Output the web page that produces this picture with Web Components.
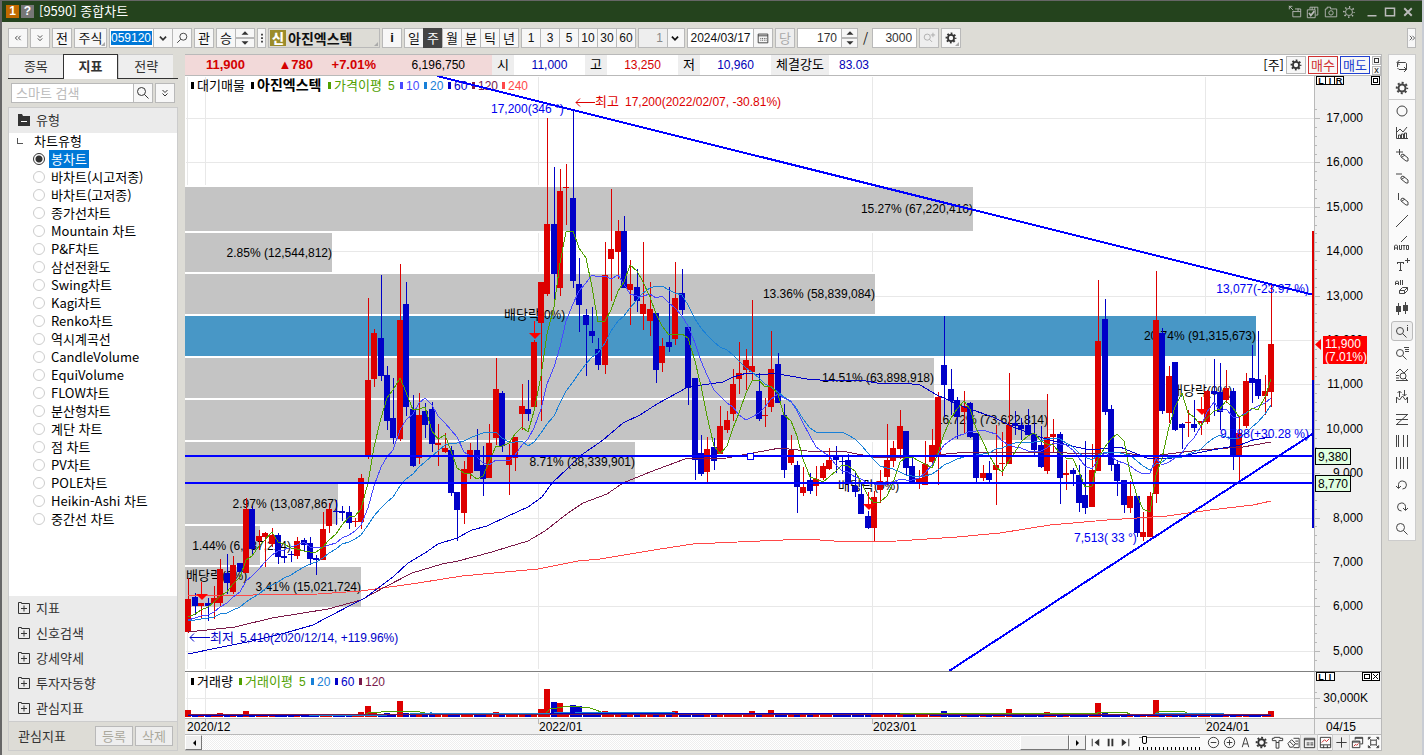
<!DOCTYPE html>
<html lang="ko">
<head>
<meta charset="utf-8">
<title>[9590] 종합차트</title>
<style>
    html, body { height: 100%; margin: 0; }
    body {
        --line: #b9b9b9;
        --ink: #333;
        --num: 12px/16px "Liberation Sans", "Noto Sans CJK KR", sans-serif;
        background: #dddcd6;
        font: 13px/18px "Noto Sans CJK KR", sans-serif;
        color: #000;
        overflow: hidden;
    }
</style>
</head>
<body>
<chart-window></chart-window>

<script>
const BASE = `
    * { box-sizing: border-box; }
    button, input, select { font: inherit; color: inherit; margin: 0; padding: 0; border: 0; border-radius: 0; background: none; }
    button { cursor: pointer; display: flex; align-items: center; justify-content: center; }
`;

class BaseElement extends HTMLElement {
    constructor() {
        super();
        this.attachShadow({ mode: "open" });
    }

    connectedCallback() {
        this.shadowRoot.innerHTML = `<style>${BASE}${this.styles()}</style>${this.markup()}`;
    }

    styles() { return ":host { display: block; }"; }
    markup() { return "<slot></slot>"; }
}

/* ---------- icons ---------- */
const GEAR = `<circle cx="8" cy="8" r="3.500" stroke-width="2"/><circle cx="8" cy="8" r="5.200" stroke-width="2" stroke-dasharray="2.040 2.040" stroke-dashoffset="1"/>`;
const LENS = `<circle cx="6.500" cy="6.500" r="4"/><path d="M9.500 9.500l4 4"/>`;
const ERASER = `<path d="M7 8l2-1 5 4v3h-2l-5-4zM8 10l3-2"/>`;

const ICONS = {
    gear: GEAR,
    lens: LENS,
    lensLeft: `<circle cx="9.500" cy="6.500" r="4"/><path d="M6.500 9.500l-4 4"/>`,
    left2: `<path d="M7.500 5.500L5 8l2.500 2.500M11 5.500L8.500 8l2.500 2.500"/>`,
    right2: `<path d="M5 5l3 3-3 3M8.500 5l3 3-3 3"/>`,
    down2: `<path d="M5.500 5L8 7.500 10.500 5M5.500 8.500L8 11l2.500-2.500"/>`,
    down: `<path d="M4.500 6.500L8 10l3.500-3.500" stroke-width="2"/>`,
    dots: `<path d="M7 3h2v2H7zM7 7h2v2H7zM7 11h2v2H7z" fill="currentColor" stroke="none"/>`,
    up1: `<path d="M4 10l4-4 4 4z" fill="currentColor" stroke="none"/>`,
    down1: `<path d="M4 6l4 4 4-4z" fill="currentColor" stroke="none"/>`,
    triLeft: `<path d="M10 5v6L7 8z" fill="currentColor" stroke="none"/>`,
    triRight: `<path d="M6 5v6l3-3z" fill="currentColor" stroke="none"/>`,
    calendar: `<path d="M2.500 3.500h11v10h-11zM2.500 5.500h11"/><path d="M5 8.500h7M5 10.500h7" stroke-dasharray="1 1"/>`,
    zoomIn: `<circle cx="6" cy="7" r="3.500"/><path d="M8.500 9.500l3 3M10 4.500h5M12.500 2v5"/>`,
    folderPlus: `<path d="M2.500 13.500v-11h3v1h8v10zM8 5.500v6M5 8.500h6"/>`,
    folderMinus: `<path d="M2 14V2h4l1 2h7v10z" fill="#333" stroke="none"/><path d="M5 9.500h6" stroke="#fff"/>`,
    /* window bar */
    popout: `<path d="M5.500 7v6.500h9v-9H8M5.500 7.500h9M11.500 4v3M1 1l5 5M1.500 5V1.500H5"/>`,
    checks: `<path d="M4.500 5V2.500h9v9H11M1.500 5.500h9v9h-9zM7 2.500v3M10 2.500v3"/><path d="M3.500 9l2 3 4-5" stroke-width="2"/>`,
    camera: `<path d="M1.500 4.500h2v-2h4v2h7v9h-13z"/><circle cx="8" cy="9" r="2.500"/>`,
    gearThin: `<circle cx="8" cy="8" r="4"/><circle cx="8" cy="8" r="5.800" stroke-width="2" stroke-dasharray="1.500 3.050" stroke-dashoffset=".7"/>`,
    minimize: `<path d="M2 13h12" stroke-width="2"/>`,
    maximize: `<path d="M2 3h12v10H2z" stroke-width="2"/>`,
    close: `<path d="M3 3l10 10M13 3L3 13" stroke-width="2.500"/>`,
    /* drawing rail */
    sync: `<path d="M3.500 9V4.500h8M5.500 2L3 4.500 5.500 7M11.500 4.500l1 1v6H5M10 9l2.500 2.500L10 14" /><path d="M5 11.500L3.500 10"/>`,
    circle: `<circle cx="8" cy="8" r="5"/>`,
    bars: `<path d="M2.500 2v11.500H14M4.500 13v-3h2v3M7.500 13V9h2v4M10.500 13V8h2v5M3 7l3-3 3 3 4-5"/>`,
    crossErase: `<path d="M2 5h7M5.500 2v6"/>${ERASER}`,
    lineErase: `<path d="M2 5h6"/>${ERASER}`,
    vertErase: `<path d="M4.500 2v7"/>${ERASER}`,
    slash: `<path d="M2 14L14 2"/>`,
    auto: `<path d="M7 7l6-6"/><path d="M.5 15v-4l1-1h1l1 1v4M.5 13h3M5.500 10v4.500h2V10M8.500 10.500h3M10 10.500V15M12.500 10.500h2v4h-2z"/>`,
    textPlus: `<path d="M3 5.500h7M3.500 5v2M9.500 5v2M6.500 5.500v8M5 13.500h3M11 3.500h5M13.500 1v5"/>`,
    allErase: `<path d="M1.500 6V3l1-1h1l1 1v3M1.500 4.500h3M6.500 1v5M8.500 1v5M5.500 11.500l3-3h5v3l-3 3h-5zM5.500 11.500h5l3-3M10.500 11.500v3"/>`,
    candles: `<path d="M4.500 2v12M11.500 1v12"/><path d="M2 5h5v6H2zM9 4h5v6H9z" fill="currentColor" stroke="none"/>`,
    lensInfo: `<circle cx="6" cy="8" r="3.500"/><path d="M8.500 10.500l4 4M13.500 2v1M13.500 4v4"/>`,
    lensList: `<circle cx="6" cy="8" r="3.500"/><path d="M8.500 10.500l4 4M10 2.500h5M11 4.500h4M11 6.500h4"/>`,
    lensChart: `<path d="M2 6l4-4 4 4 4-4M2 8.500h3M2 11h3M2 13.500h12"/><circle cx="9" cy="9" r="3"/><path d="M11 11l3 3"/>`,
    waves: `<path d="M2.500 14V8l3 3 3-4 3 4 2-3v6M5.500 8V2M3.500 4l2-2 2 2M10.500 1v6M8.500 5l2 2 2-2"/>`,
    zigzag: `<path d="M2 3.500h12M2 13.500h12M2 8.500h12M13 4L3 13"/>`,
    cols1: `<path d="M2.500 2v12M4.500 2v12M9.500 2v12M13.500 2v12"/>`,
    cols2: `<path d="M2.500 2v12M6.500 2v12M9.500 2v12M13.500 2v12"/>`,
    undo: `<path d="M4.500 11V7.500a4 4 0 1 1 4 4.500M2 9l2.500 2.500L7 9"/>`,
    redo: `<path d="M11.500 11V7.500a4 4 0 1 0-4 4.500M9 9l2.500 2.500L14 9"/>`,
    /* playback and zoom */
    first: `<path d="M4.500 4v8"/><path d="M12 4v8L7 8z" fill="currentColor" stroke="none"/>`,
    pause: `<path d="M6 4v8M10 4v8" stroke-width="2"/>`,
    last: `<path d="M11.500 4v8"/><path d="M4 4v8l5-4z" fill="currentColor" stroke="none"/>`,
    minusO: `<circle cx="8" cy="8" r="5.500"/><path d="M5 8h6"/>`,
    plusO: `<circle cx="8" cy="8" r="5.500"/><path d="M5 8h6M8 5v6"/>`,
    letterA: `<path d="M4.500 13l3-10h1l3 10M5.500 9.500h5"/>`,
    brush: `<path d="M2.500 6V3.500h2v-1h6v1h3V6h-4v8h-3V6zM6.500 8h3"/>`,
    erasePage: `<path d="M8 3.500h6v10H8M10 6.500h3M10 9.500h3M2 9l4-4 4 4-3 4H4zM4 7l4 4"/>`,
    grid: `<path d="M2.500 3.500h11v10h-11zM2.500 5h11M5 8.500h3M5 10.500h3M9 8.500h3M9 10.500h3"/>`,
    chartBox: `<path d="M2.500 2.500h11v11h-11zM2.500 10.500h11M6 11v3M10 11v3"/><path d="M4 8l3-3 2 2 3-3" stroke="#c22"/>`,
    plus: `<path d="M8 2.500v11M2.500 8h11"/>`,
    windows: `<path d="M5.500 5V2.500h8v7H11M5.500 3.500h8M2.500 6.500h8v7h-8zM2.500 7.500h8"/><path d="M4 12l2-2 1 1 2-2" stroke="#c22"/>`,
    expand: `<path d="M5 5.500h6v5H5zM2.500 5V2.500H5M11 2.500h2.500V5M13.500 11v2.500H11M5 13.500H2.500V11M3 3l2 2M13 3l-2 2M3 13l2-2M13 13l-2-2"/>`
};

class UiIcon extends BaseElement {
    styles() {
        return `
            :host { display: inline-block; width: 16px; height: 16px; flex: none; }
            svg { display: block; width: 100%; height: 100%; fill: none; stroke: currentColor; }
        `;
    }
    markup() {
        return `<svg viewBox="0 0 16 16" aria-hidden="true">${ICONS[this.getAttribute("name")]}</svg>`;
    }
}
customElements.define("ui-icon", UiIcon);

const icon = (name) => `<ui-icon name="${name}"></ui-icon>`;
const iconButton = (name, label, cls = "") => `<button type="button" class="${cls}" aria-label="${label}">${icon(name)}</button>`;

/* ---------- title bar ---------- */
class TitleBar extends BaseElement {
    styles() {
        return `
            :host {
                display: flex; align-items: center; height: 22px; padding: 0 5px 0 4px;
                background: #24431d; color: #fff; border-top: 1px solid #666;
            }
            .tag { width: 13px; height: 13px; margin-right: 2px; font: bold 12px/13px "Liberation Sans", sans-serif; text-align: center; background: #c26a00; color: #fff; }
            .help { background: #777; }
            h1 { margin: 0 auto 0 3px; font-size: 13px; line-height: 18px; padding-bottom: 1px; font-weight: normal; }
            button { width: 18px; height: 18px; color: #bbb; }
            ui-icon { width: 14px; height: 14px; }
            .win { width: 18px; }
            .win ui-icon { width: 12px; height: 12px; }
            .gap { margin-left: 5px; }
        `;
    }
    markup() {
        return `
            <span class="tag">1</span><button type="button" class="tag help" aria-label="도움말"><span>?</span></button>
            <h1><slot></slot></h1>
            ${iconButton("popout", "분리")}${iconButton("checks", "선택")}${iconButton("camera", "캡처")}${iconButton("gearThin", "설정")}
            ${iconButton("minimize", "최소화", "win gap")}${iconButton("maximize", "최대화", "win")}${iconButton("close", "닫기", "win")}
        `;
    }
}
customElements.define("title-bar", TitleBar);

/* ---------- main toolbar ---------- */
class MainToolbar extends BaseElement {
    styles() {
        return `
            :host { display: flex; align-items: center; gap: 2px; height: 32px; padding-left: 6px; color: #111; }
            button, .box { height: 20px; border: 1px solid var(--line); background: #f7f7f7; }
            button { width: 20px; flex: none; }
            button ui-icon { width: 14px; height: 14px; color: #333; }
            .group { display: flex; }
            .group > * + * { margin-left: -1px; }
            .nums { font: var(--num); }
            .wide { width: 33px; position: relative; }
            .corner::after { content: ""; position: absolute; right: 1px; bottom: 1px; border: 2px solid transparent; border-right-color: #aaa; border-bottom-color: #aaa; }
            .corner { position: relative; }
            .box { display: flex; align-items: center; background: #fff; font: var(--num); }
            .code { width: 45px; padding-left: 1px; }
            .code input { width: 41px; height: 14px; background: #0078d7; color: #fff; }
            .spin { display: flex; flex-direction: column; width: 20px; height: 20px; }
            .spin.slim { width: 17px; }
            .spin button { width: 100%; height: 10px; overflow: hidden; }
            .narrow { width: 9px; }
            .stock { width: 112px; padding: 1px; font-size: 14px; font-weight: bold; background: #dddcd6; gap: 2px; justify-content: flex-start; }
            .stock b { width: 16px; height: 16px; line-height: 16px; font-size: 13px; color: #fff; background: #9b8c2b; }
            .bold { font: bold 13px/16px "Liberation Sans", sans-serif; }
            .on { background: #444; color: #fff; border-color: #444; }
            .min { display: grid; grid-template-columns: 29px 16px; width: 47px; background: linear-gradient(90deg, #eee 28px, var(--line) 28px 29px, #f7f7f7 29px); }
            .min select { grid-area: 1 / 1 / 2 / 3; appearance: none; height: 18px; padding-right: 21px; text-align: right; text-align-last: right; color: #888; }
            .min ui-icon { grid-area: 1 / 2; width: 14px; height: 14px; pointer-events: none; }
            input.num { width: 100%; text-align: right; padding-right: 4px; color: #333; }
            .date { width: 67px; }
            .date input { width: 100%; text-align: center; }
            .count { width: 45px; }
            .muted, .muted ui-icon { color: #aaa; background: #eee; }
            .slash { padding: 0 2px 0 3px; }
            .more { width: 9px; margin-left: auto; margin-right: 6px; }
            .more ui-icon { width: 12px; height: 12px; }
        `;
    }
    markup() {
        const cells = (list) => list.map((t) => `<button type="button"${t === "주" ? ' class="on" aria-pressed="true"' : ""}>${t}</button>`).join("");
        const spin = (label, cls = "") => `<span class="spin ${cls}">${iconButton("up1", label + " 증가")}${iconButton("down1", label + " 감소")}</span>`;
        return `
            <div class="group">${iconButton("left2", "패널 접기")}</div>
            ${iconButton("down2", "펼치기")}
            <button type="button">전</button>
            <button type="button" class="wide corner">주식</button>
            <div class="group">
                <label class="box code"><input aria-label="종목코드" value="059120"></label>
                ${iconButton("down", "종목 목록")}${iconButton("lensLeft", "종목 검색")}
            </div>
            <button type="button">관</button>
            <div class="group"><button type="button">승</button>${spin("종목")}</div>
            ${iconButton("dots", "더보기", "narrow")}
            <button type="button" class="stock corner"><b>신</b>아진엑스텍</button>
            <button type="button" class="bold">i</button>
            <div class="group">${cells(["일", "주", "월", "분", "틱", "년"])}</div>
            <div class="group nums">${cells(["1", "3", "5", "10", "30", "60"])}</div>
            <div class="box min"><select aria-label="분 단위"><option>1</option></select>${icon("down")}</div>
            <div class="group">
                <label class="box date"><input aria-label="기준일" value="2024/03/17"></label>${iconButton("calendar", "달력")}
            </div>
            <button type="button" class="muted">당</button>
            <div class="group">
                <label class="box count"><input class="num" aria-label="표시 봉 수" value="170"></label>${spin("봉 수", "slim")}
            </div>
            <span class="slash">/</span>
            <label class="box count"><input class="num" aria-label="전체 봉 수" value="3000"></label>
            ${iconButton("zoomIn", "확대", "muted")}
            ${iconButton("gear", "차트 설정", "corner")}
            ${iconButton("right2", "더보기", "more")}
        `;
    }
}
customElements.define("main-toolbar", MainToolbar);

/* ---------- side panel ---------- */
const CHART_TYPES = ["봉차트", "바차트(시고저종)", "바차트(고저종)", "종가선차트", "Mountain 차트", "P&amp;F차트", "삼선전환도",
    "Swing차트", "Kagi차트", "Renko차트", "역시계곡선", "CandleVolume", "EquiVolume", "FLOW차트", "분산형차트",
    "계단 차트", "점 차트", "PV차트", "POLE차트", "Heikin-Ashi 차트", "중간선 차트"];

class SidePanel extends BaseElement {
    styles() {
        return `
            :host { display: flex; flex-direction: column; width: 170px; flex: none; color: var(--ink); }
            .tabs { display: flex; height: 25px; padding-right: 5px; border-bottom: 1px solid #333; }
            .tabs button { flex: 1; padding-bottom: 2px; background: #eee; border-top: 1px solid #ccc; border-left: 1px solid #ccc; }
            .tabs .on { background: #fff; border: 1px solid #333; border-bottom: 0; height: 25px; font-weight: bold; }
            .search { display: flex; height: 28px; padding: 4px 3px; }
            .search input { flex: 1; min-width: 0; border: 1px solid var(--line); background: #fff; padding: 0 0 1px 4px; }
            .search input::placeholder { color: #bbb; opacity: 1; }
            .search button { width: 20px; border: 1px solid var(--line); background: #f7f7f7; margin-left: -1px; }
            .search button:last-child { margin-left: 2px; }
            .panel { flex: 1; min-height: 0; display: flex; flex-direction: column; border: 1px solid #ccc; background: #fff; }
            .row { display: flex; align-items: center; gap: 4px; flex: none; width: 100%; height: 25px; padding: 0 0 2px 7px; justify-content: flex-start; background: #ebebeb; }
            fieldset { flex: 1; min-height: 0; margin: 0; padding: 0; border: 0; color: #000; overflow: hidden; }
            legend { float: left; width: 100%; padding: 0 0 2px 8px; height: 18px; display: flex; align-items: center; gap: 11px; }
            legend::before { content: ""; width: 5px; height: 5px; border: solid #555; border-width: 0 0 1px 1px; }
            fieldset label { clear: both; display: flex; align-items: center; gap: 4px; height: 18px; padding: 0 0 2px 24px; }
            fieldset input { appearance: none; width: 12px; height: 12px; flex: none; border: 1px solid #ccc; border-radius: 50%; background: #fff; }
            fieldset span { padding: 0 2px; }
            input:checked { border-color: #333; background: radial-gradient(#333 3px, #fff 4px); }
            input:checked + span { background: #0078d7; color: #fff; }
            footer { display: flex; align-items: center; gap: 2px; height: 29px; padding: 0 4px 1px 9px; background: #dddcd6; border-top: 1px solid #ccc; }
            footer span { margin-right: auto; }
            footer button { width: 38px; height: 20px; border: 1px solid var(--line); background: #eee; color: #aaa89c; }
        `;
    }
    markup() {
        return `
            <div class="tabs" role="tablist">
                <button type="button" role="tab">종목</button><button type="button" role="tab" class="on" aria-selected="true">지표</button><button type="button" role="tab">전략</button>
            </div>
            <div class="search"><input type="text" placeholder="스마트 검색" aria-label="스마트 검색">${iconButton("lens", "검색")}${iconButton("down2", "펼치기")}</div>
            <div class="panel">
                <button type="button" class="row">${icon("folderMinus")}유형</button>
                <fieldset>
                    <legend>차트유형</legend>
                    ${CHART_TYPES.map((t, i) => `<label><input type="radio" name="type"${i ? "" : " checked"}><span>${t}</span></label>`).join("")}
                </fieldset>
                ${["지표", "신호검색", "강세약세", "투자자동향", "관심지표"].map((t) => `<button type="button" class="row">${icon("folderPlus")}${t}</button>`).join("")}
                <footer><span>관심지표</span><button type="button">등록</button><button type="button">삭제</button></footer>
            </div>
        `;
    }
}
customElements.define("side-panel", SidePanel);

/* ---------- quote bar ---------- */
class QuoteBar extends BaseElement {
    styles() {
        return `
            :host { display: flex; align-items: center; height: 22px; background: #fff; border: 1px solid var(--line); border-left: 0; font: var(--num); }
            .now { display: flex; height: 20px; line-height: 20px; padding-right: 27px; background: #f2d9d9; text-align: right; }
            .now b { font: bold 13px/20px "Liberation Sans", sans-serif; color: #d40000; }
            .w60 { width: 60px; } .w68 { width: 68px; } .w63 { width: 63px; } .w89 { width: 89px; }
            .k { height: 20px; width: 22px; font: 13px/18px "Noto Sans CJK KR", sans-serif; text-align: center; background: #eee; }
            .v { width: 71px; text-align: center; color: #0000b8; }
            .up { color: #d40000; }
            .long { width: 58px; }
            .right { display: flex; align-items: center; gap: 2px; margin-left: auto; font: 13px/18px "Noto Sans CJK KR", sans-serif; }
            .right button { width: 30px; height: 18px; border: 1px solid; background: #f7f7f7; }
            .right .set { width: 20px; border-color: var(--line); }
            .set ui-icon { width: 14px; height: 14px; color: #333; }
            .buy { color: #d03030; } .sell { color: #2040d0; }
            .mini { display: grid; gap: 1px; }
            .mini button { width: 9px; height: 9px; border-color: var(--line); font: 9px/8px "Liberation Sans", sans-serif; }
            .mini i { width: 5px; height: 5px; border: 1px solid #333; }
        `;
    }
    markup() {
        return `
            <div class="now"><b class="w60">11,900</b><b class="w68">▲780</b><b class="w63">+7.01%</b><span class="w89">6,196,750</span></div>
            <span class="k">시</span><span class="v">11,000</span>
            <span class="k">고</span><span class="v up">13,250</span>
            <span class="k">저</span><span class="v">10,960</span>
            <span class="k long">체결강도</span><span class="v" style="width:50px">83.03</span>
            <div class="right">
                <span>[주]</span>${iconButton("gear", "설정", "set")}
                <button type="button" class="buy">매수</button><button type="button" class="sell">매도</button>
                <span class="mini"><button type="button" aria-label="확대"><i></i></button><button type="button" aria-label="닫기">x</button></span>
            </div>
        `;
    }
}
customElements.define("quote-bar", QuoteBar);

/* ---------- chart ---------- */
/* one weekly bar per entry: r/b (rise or fall), then y of high, body top, body bottom, low */
const BARS = `r578,599,632,633 b593,597,606,615 r603,603,606,619 b598,603,606,621 r586,598,603,619 r559,569,603,606 b554,573,583,594
r556,565,592,594 b563,563,572,572 r498,509,573,573 b506,509,549,555 r530,536,541,550 r532,533,537,567 r528,535,544,547 b533,535,557,564
b550,556,558,563 b551,554,555,562 r537,541,556,559 b538,540,545,551 b537,543,559,565 b555,558,560,575 r512,529,560,560 r503,509,526,533
b500,511,512,525 b506,511,513,521 b506,512,523,529 r518,521,522,527 r474,478,522,529 r298,380,455,459 r329,333,379,387 b275,338,376,381
b366,375,421,430 b378,418,438,444 r264,320,439,441 b282,304,407,416 b395,409,466,467 r393,415,458,464 b403,411,425,438 b402,409,444,452
r424,443,445,466 r433,448,452,453 b446,450,493,496 b492,492,510,541 r461,469,513,524 r443,450,473,479 b429,450,471,471 b446,465,479,496
r424,443,478,478 r358,389,438,445 b391,393,446,452 r444,456,465,495 r437,437,458,471 r384,406,414,430 b380,409,414,421 r340,342,407,410
r282,282,323,421 r118,224,294,296 b167,224,274,303 r169,191,288,296 r164,187,188,225 b110,198,281,288 b258,284,305,332 b309,315,325,376
b307,331,336,343 b338,349,365,370 r242,275,365,374 r189,249,259,301 r220,231,252,279 b216,231,288,288 r260,284,290,325 b269,287,301,312
r242,304,314,330 r282,309,321,336 b313,313,370,383 r338,346,363,372 b287,342,347,352 r262,298,339,345 b269,293,310,315 b327,327,388,405
b378,378,460,480 b435,453,474,476 r437,449,472,482 b438,447,461,470 r406,426,454,454 r411,420,430,433 r369,384,414,421 r342,373,379,394
r349,360,370,390 r300,366,372,380 b373,391,419,421 r398,415,416,427 r331,369,407,412 b353,364,403,403 b404,415,470,478 r435,450,463,465
b461,465,487,513 r467,487,493,496 b473,480,491,494 r466,479,486,496 r463,466,478,480 r448,460,469,470 b446,456,460,473 b457,461,462,474
b454,460,482,492 b471,486,492,497 b483,494,514,514 b511,516,528,529 r491,497,528,541 r470,481,490,503 r424,460,477,485 r441,448,461,467
r410,426,449,459 b431,431,468,475 b457,466,483,483 r470,478,484,489 r441,464,485,485 r429,445,462,467 r392,397,454,485 b316,365,385,417
b369,389,401,415 b397,400,417,439 r391,406,412,433 b402,403,437,438 b433,433,478,482 r465,473,478,481 b461,473,480,482 r425,465,470,505
r432,463,464,476 r373,425,464,464 b411,423,426,435 b418,425,429,440 b409,425,435,435 b423,434,450,455 b426,445,467,468 r394,437,471,474
r419,434,437,452 b432,434,478,504 r460,473,475,490 b468,470,474,486 b465,475,503,512 b441,495,508,514 r444,470,507,507 r280,341,471,471
b299,319,412,415 b405,409,465,471 b460,464,481,496 b480,480,505,513 r481,496,508,513 b496,496,533,537 r512,532,537,541 r492,496,537,537
r271,320,494,503 b328,333,411,414 r366,376,413,423 b362,362,430,431 b423,424,428,449 r410,422,423,437 b400,424,428,432 r421,421,423,435
r390,391,422,424 b359,391,394,416 b363,392,412,430 r370,388,400,403 b388,391,456,470 r417,433,455,481 r373,381,426,428 b345,378,383,403
b331,379,396,399 r375,391,396,415 r285,344,392,407`.split(/\s+/).map((s) => ({ up: s[0] === "r", v: s.slice(1).split(",").map(Number) }));

const barX = (i) => Math.round(188.3 + i * 6.408);
const RED = "#d00";
const BLUE = "#0000c8";
const GREEN = "#50a000";

/* volume profile: top, height, right end, label */
const BANDS = [
    [187, 44, 973, "15.27% (67,220,416)"], [233, 39, 332, "2.85% (12,544,812)"], [274, 40, 875, "13.36% (58,839,084)"],
    [316, 40, 1256, "20.74% (91,315,673)"], [358, 40, 934, "14.51% (63,898,918)"], [400, 40, 1048, "16.72% (73,622,814)"],
    [442, 40, 635, "8.71% (38,339,901)"], [484, 40, 338, "2.97% (13,087,867)"], [526, 39, 260, "1.44% (6,337,214)"], [567, 40, 361, "3.41% (15,021,724)"]
];

const MA60 = "188,654 222,647 252,641 285,633 313,625 328,617 355,603 365,598 393,577 408,563 425,553 438,544 457,538 472,530 487,526 508,516 528,507 542,497 552,483 568,468 580,456 603,440 623,423 640,415 657,404 688,387 723,382 733,377 747,373 763,375 773,373 807,379 820,380 860,380 883,384 903,383 920,385 937,395 957,404 967,408 993,417 1013,427 1040,437 1067,445 1090,450 1120,447 1147,458 1167,459 1207,451 1240,445 1253,440 1271,437";
const MA120 = "188,632 235,627 272,618 328,609 361,600 385,587 412,573 442,564 458,561 492,552 508,547 528,541 545,531 568,513 583,503 607,494 623,483 650,472 685,459 727,458 753,453 780,448 807,451 847,452 873,457 913,457 957,453 973,452 1017,452 1067,453 1090,454 1120,452 1150,457 1160,455 1200,450 1243,447 1271,442";
const MA240 = "188,596 318,594 361,591 418,583 462,576 505,572 538,569 578,561 600,559 660,549 693,544 760,541 807,539 847,542 897,541 957,537 1000,533 1050,525 1107,520 1167,516 1210,510 1253,505 1271,501";

const GRID_Y = Array.from({ length: 13 }, (_, i) => Math.round(118 + i * 44.4));
const YEARS = [[205, "2020/12", 187], [538, "2022/01", 539], [872, "2023/01", 873], [1205, "2024/01", 1206]];

function movingAverage(n) {
    const closes = Array(n - 1).fill(622).concat(BARS.map((b) => (b.up ? b.v[1] : b.v[2])));
    return BARS.map((_, i) => `${barX(i)},${Math.round(closes.slice(i, i + n).reduce((a, c) => a + c, 0) / n)}`).join(" ");
}

const text = (x, y, str, extra = "") => `<text x="${x}" y="${y}" ${extra}>${str}</text>`;
const polyline = (points, color) => `<polyline points="${points}" stroke="${color}" fill="none"/>`;
const legend = (y, items) => items.map(([x, str, color, cls]) =>
    (cls === "bare" ? "" : `<rect x="${x}" y="${y - 8}" width="3" height="7" fill="${color}"/>`)
    + text(x + 6, y, str, `fill="${color}" class="${cls || ""}"`)).join("");
const verticals = (y1, y2) => [187, ...YEARS.map((d) => d[0])].map((x) => `<path d="M${x}.5 ${y1}V${y2}" stroke="#e8e8e8"/>`).join("");

const VOLUMES = { 0: 6, 5: 3, 9: 5, 20: 2, 27: 4, 28: 10, 29: 4, 31: 3, 33: 15, 34: 3, 48: 4, 55: 7, 56: 27, 57: 14, 58: 13, 59: 4, 60: 11, 61: 10, 65: 5,
    66: 4, 76: 5, 88: 5, 91: 6, 117: 3, 118: 5, 119: 3, 128: 7, 134: 4, 142: 13, 143: 4, 151: 16, 152: 3, 154: 3, 169: 5 };

class ChartView extends BaseElement {
    styles() {
        return `
            :host { display: grid; grid-template: minmax(0, 1fr) 46px 17px / minmax(0, 1fr) 67px; flex: 1; min-height: 0; background: #fff; border-right: 1px solid var(--line); }
            svg { display: block; width: 100%; height: 100%; overflow: hidden; font: var(--num); }
            .ko { font: 13px "Noto Sans CJK KR", sans-serif; }
            .bold { font: bold 14px "Noto Sans CJK KR", sans-serif; }
            .price, .pricey { border-bottom: 1px solid #808080; }
            .axis { background: #f0f0f0; border-left: 1px solid var(--line); }
            .dates { background: #f0f0f0; border-top: 1px solid var(--line); border-bottom: 1px solid var(--line); }
            .box { fill: #fff; stroke: #000; }
            .tiny { font: bold 9px "Liberation Sans", sans-serif; text-anchor: middle; }
        `;
    }

    price() {
        const marker = (x, y) => `<path d="M${x}.5 ${y - 12}v12" stroke="#f00"/><path d="M${x - 5} ${y}h12l-6 6z" fill="#f00"/>`;
        return `
            ${GRID_Y.map((y) => `<path d="M186 ${y}.5H1315" stroke="#e8e8e8"/>`).join("")}
            ${verticals(77, 669)}
            ${BANDS.map(([y, h, x]) => `<rect x="185" y="${y - 2}" width="${x - 185}" height="${h + 4}" fill="#fff"/>`).join("")}
            ${BANDS.map(([y, h, x], i) => `<rect x="185" y="${y}" width="${x - 185}" height="${h}" fill="${i === 3 ? "#4897c6" : "#c4c4c4"}"/>`).join("")}
            ${BANDS.map(([y, h, x, label], i) => text(i === 8 ? 291 : x, y + Math.round(h / 2) + 4, label, 'text-anchor="end"')).join("")}
            ${legend(90, [[191, "대기매물", "#000", "ko"], [251, "아진엑스텍", "#000", "bold"], [328, "가격이평", GREEN, "ko"], [382, "5", GREEN, "bare"],
                [400, "10", "#4848ff"], [424, "20", "#1880d8"], [448, "60", BLUE], [472, "120", "#7a1a4a"], [502, "240", "#ff4848"]])}
            ${[[504, 319], [186, 580], [838, 490], [1171, 395]].map(([x, y]) => text(x, y, '<tspan class="ko">배당락</tspan>(0%)')).join("")}
            <g shape-rendering="crispEdges">
                ${BARS.map((b, i) => {
                    const [hi, top, bot, lo] = b.v;
                    const x = barX(i);
                    return `<g fill="${b.up ? RED : BLUE}"><rect x="${x}" y="${hi}" width="1" height="${lo - hi}"/><rect x="${x - 3}" y="${top}" width="6" height="${Math.max(1, bot - top)}"/></g>`;
                }).join("")}
                ${polyline(MA240, "#ff4848")}${polyline(MA120, "#7a1a4a")}${polyline(MA60, BLUE)}
                ${polyline(movingAverage(20), "#1880d8")}${polyline(movingAverage(10), "#4848ff")}${polyline(movingAverage(5), GREEN)}
            </g>
            ${marker(201, 594)}${marker(534, 333)}${marker(868, 504)}${marker(1201, 409)}
            <g stroke="#00f" stroke-width="2" shape-rendering="crispEdges">
                <path d="M437 76L1314 295M949 671L1314 433M185 456H1314M185 483H1314"/>
            </g>
            <rect x="747.5" y="453.5" width="6" height="6" fill="#fff" stroke="#00f"/>
            <rect x="1312" y="231" width="3" height="149" fill="${RED}"/><rect x="1312" y="380" width="3" height="148" fill="${BLUE}"/>
            <g fill="#0000f0">
                ${text(491, 113, "17,200(346 °)")}${text(1309, 293, "13,077(-23.97 %)", 'text-anchor="end"')}
                ${text(1309, 438, "9,788(+30.28 %)", 'text-anchor="end"')}${text(1074, 542, "7,513( 33 °)")}
            </g>
            <path d="M595 102.5H576M580 98.5l-4 4 4 4" stroke="${RED}" fill="none"/>
            <g fill="${RED}">${text(595, 106, "최고", 'class="ko"')}${text(625, 106, "17,200(2022/02/07, -30.81%)")}</g>
            <path d="M210 637.5H190M194 633.5l-4 4 4 4" stroke="${BLUE}" fill="none"/>
            <g fill="${BLUE}">${text(210, 642, "최저", 'class="ko"')}${text(240, 642, "5,410(2020/12/14, +119.96%)")}</g>
        `;
    }

    priceAxis() {
        const ticks = [];
        for (let i = -1; i < 62; i++) {
            const y = Math.round(118 + i * 8.88);
            ticks.push(`M1315 ${y}.5h${i % 5 ? 2 : 5}`);
        }
        const tag = (y, str) => `<rect x="1315.5" y="${y}.5" width="35" height="16" fill="#e0ffe0" stroke="#000"/>` + text(1318, y + 13, str);
        const cell = (x, c) => `<rect x="${x}.5" y="76.5" width="9" height="8" class="box"/>` + text(x + 5, 84, c, 'class="tiny"');
        return `
            <path d="${ticks.join("")}" stroke="var(--line)"/>
            ${GRID_Y.map((y, i) => text(1363, y + 4, `${17 - i},000`, 'text-anchor="end"')).join("")}
            ${cell(1316, "L")}${cell(1325, "I")}${cell(1334, "R")}
            <rect x="1371.5" y="76.5" width="8" height="8" class="box"/><rect x="1373.5" y="78.5" width="4" height="4" class="box"/>
            <path d="M1321 339v11l-6-5.500z" fill="#f00"/><rect x="1323" y="336" width="44" height="28" fill="#f00"/>
            <g fill="#fff">${text(1325, 348, "11,900")}${text(1325, 361, "(7.01%)")}</g>
            ${tag(448, "9,380")}${tag(475, "8,770")}
        `;
    }

    volume() {
        return `
            <path d="M186 698.5H1315" stroke="#e8e8e8"/>${verticals(673, 717)}
            ${legend(686, [[191, "거래량", "#000", "ko"], [239, "거래이평", GREEN, "ko"], [293, "5", GREEN, "bare"], [311, "20", "#1880d8"], [335, "60", BLUE], [359, "120", "#7a1a4a"]])}
            <g shape-rendering="crispEdges">
                ${BARS.map((b, i) => {
                    const h = VOLUMES[i] || 1;
                    return `<rect x="${barX(i) - 3}" y="${716 - h}" width="6" height="${h + 1}" fill="${b.up ? RED : BLUE}"/>`;
                }).join("")}
                ${polyline("188,715 365,715 368,713 395,711 420,712 430,714 545,714 550,709 570,706 590,708 604,713 1095,714 1100,712 1125,712 1130,714 1155,714 1160,711 1185,712 1190,715 1271,714", GREEN)}
                ${polyline("188,716 390,715 430,713 548,714 560,712 670,712 680,714 1095,714 1155,714 1160,713 1223,713 1225,715 1271,715", "#1880d8")}
                ${polyline("188,716 430,714 550,714 570,713 900,714 930,715 1271,715", BLUE)}
                ${polyline("188,715 1271,714", "#7a1a4a")}
            </g>
        `;
    }

    volumeAxis() {
        const cell = (x, c) => `<rect x="${x}.5" y="672.5" width="9" height="8" class="box"/>` + text(x + 5, 680, c, 'class="tiny"');
        return `
            <path d="M1315 698.5h5M1315 692.5h2M1315 707.5h2" stroke="var(--line)"/>
            ${text(1368, 702, "30,000K", 'text-anchor="end"')}${cell(1316, "L")}${cell(1325, "I")}
            <rect x="1362.5" y="672.5" width="9" height="8" class="box"/><rect x="1364.5" y="674.5" width="5" height="4" class="box"/>
            <rect x="1371.5" y="672.5" width="8" height="8" class="box"/><path d="M1373 674l5 5M1378 674l-5 5" stroke="#000"/>
        `;
    }

    markup() {
        const layer = (cls, dx, dy, body) => `<svg class="${cls}"><g transform="translate(${-dx} ${-dy})">${body}</g></svg>`;
        return layer("price", 185, 76, this.price())
            + layer("axis pricey", 1315, 76, this.priceAxis())
            + layer("volume", 185, 672, this.volume())
            + layer("axis", 1315, 672, this.volumeAxis())
            + layer("dates", 185, 719, YEARS.map(([x, str, tx]) => `<path d="M${x}.5 719v5" stroke="var(--line)"/>` + text(tx, 731, str)).join(""))
            + layer("axis dates", 1315, 719, text(1326, 731, "04/15"));
    }
}
customElements.define("chart-view", ChartView);

/* ---------- scroll and playback row ---------- */
class ChartScroller extends BaseElement {
    styles() {
        return `
            :host { display: flex; align-items: center; height: 16px; background: #fafafa; border: 1px solid var(--line); border-top: 0; border-left: 0; color: #333; }
            .step { width: 17px; height: 15px; color: #000; background: #f0f0f0; border: 1px solid; border-color: #fff #777 #777 #fff; }
            .track { flex: 1; height: 15px; display: flex; justify-content: flex-end; background: repeating-conic-gradient(#eee 0 25%, #fff 0 50%) 0 0 / 2px 2px; }
            .thumb { width: 49px; border: 1px solid; border-color: #fff #777 #777 #fff; background: #f0f0f0; }
            .play, .tools { display: flex; }
            .play { margin: 0 6px 0 2px; }
            .play button { width: 15px; height: 15px; }
            .tools button { width: 16px; height: 15px; }
            ui-icon { width: 15px; height: 15px; }
            .step ui-icon { width: 16px; height: 16px; }
            .on { background: #eee; outline: 1px solid #ccc; }
            .slider {
                width: 61px; height: 15px; margin-right: 5px; display: flex; align-items: flex-start;
                background: repeating-linear-gradient(90deg, #000 0 1px, transparent 1px 4px) 0 100% / 100% 3px no-repeat;
            }
            input { appearance: none; width: 100%; height: 10px; background: linear-gradient(#888, #888) 0 2px / 100% 1px no-repeat; }
            input::-webkit-slider-thumb { appearance: none; width: 5px; height: 8px; border: 1px solid #000; border-radius: 0 0 2px 2px; background: #fff; }
        `;
    }
    markup() {
        const tools = [["minusO", "축소"], ["plusO", "확대"], ["letterA", "자동"], ["gear", "설정"], ["brush", "서식"], ["erasePage", "지우기"],
            ["grid", "표", "on"], ["chartBox", "차트"], ["plus", "십자선", "on"], ["windows", "창 배열"], ["expand", "전체화면"]];
        return `
            ${iconButton("triLeft", "왼쪽으로", "step")}
            <div class="track"><div class="thumb"></div></div>
            ${iconButton("triRight", "오른쪽으로", "step")}
            <div class="play">${iconButton("first", "처음")}${iconButton("pause", "일시정지")}${iconButton("last", "마지막")}</div>
            <label class="slider"><input type="range" min="0" max="100" value="5" aria-label="재생 속도"></label>
            <div class="tools">${tools.map((t) => iconButton(...t)).join("")}</div>
        `;
    }
}
customElements.define("chart-scroller", ChartScroller);

/* ---------- drawing tools ---------- */
class ToolRail extends BaseElement {
    styles() {
        return `
            :host { display: block; align-self: flex-start; width: 28px; flex: none; border: 1px solid #ccc; background: #fafafa; color: #444; }
            button { width: 26px; height: 22px; }
            hr { margin: 0; border: 0; border-top: 1px solid #ccc; }
            .on { width: 22px; height: 20px; margin: 1px 2px; border: 1px solid #bbb; border-radius: 3px; background: #eee; }
        `;
    }
    markup() {
        const tools = [["circle", "원"], ["bars", "지표"], ["crossErase", "십자선 삭제"], ["lineErase", "수평선 삭제"], ["vertErase", "수직선 삭제"],
            ["slash", "추세선"], ["auto", "자동 추세선"], ["textPlus", "문자"], ["allErase", "전체 삭제"], ["candles", "캔들"], ["lensInfo", "정보", "on"],
            ["lensList", "목록"], ["lensChart", "차트 검색"], ["waves", "파동"], ["zigzag", "지그재그"], ["cols1", "시간대"], ["cols2", "등간격"],
            ["undo", "실행 취소"], ["redo", "다시 실행"], ["lens", "돋보기"]];
        return `${iconButton("sync", "동기화")}${iconButton("gear", "설정")}<hr>${tools.map((t) => iconButton(...t)).join("")}`;
    }
}
customElements.define("tool-rail", ToolRail);

/* ---------- window ---------- */
class ChartWindow extends BaseElement {
    styles() {
        return `
            :host { display: flex; flex-direction: column; height: 100%; border-left: 2px solid #666; border-right: 2px solid #c8ccd4; box-sizing: border-box; }
            main { flex: 1; min-height: 0; display: flex; gap: 6px; padding: 0 6px 4px; }
            .chart { flex: 1; min-width: 0; margin-left: 1px; display: flex; flex-direction: column; }
        `;
    }
    markup() {
        return `
            <title-bar>[9590] 종합차트</title-bar>
            <main-toolbar></main-toolbar>
            <main>
                <side-panel></side-panel>
                <div class="chart"><quote-bar></quote-bar><chart-view></chart-view><chart-scroller></chart-scroller></div>
                <tool-rail></tool-rail>
            </main>
        `;
    }
}
customElements.define("chart-window", ChartWindow);
</script>
</body>
</html>
